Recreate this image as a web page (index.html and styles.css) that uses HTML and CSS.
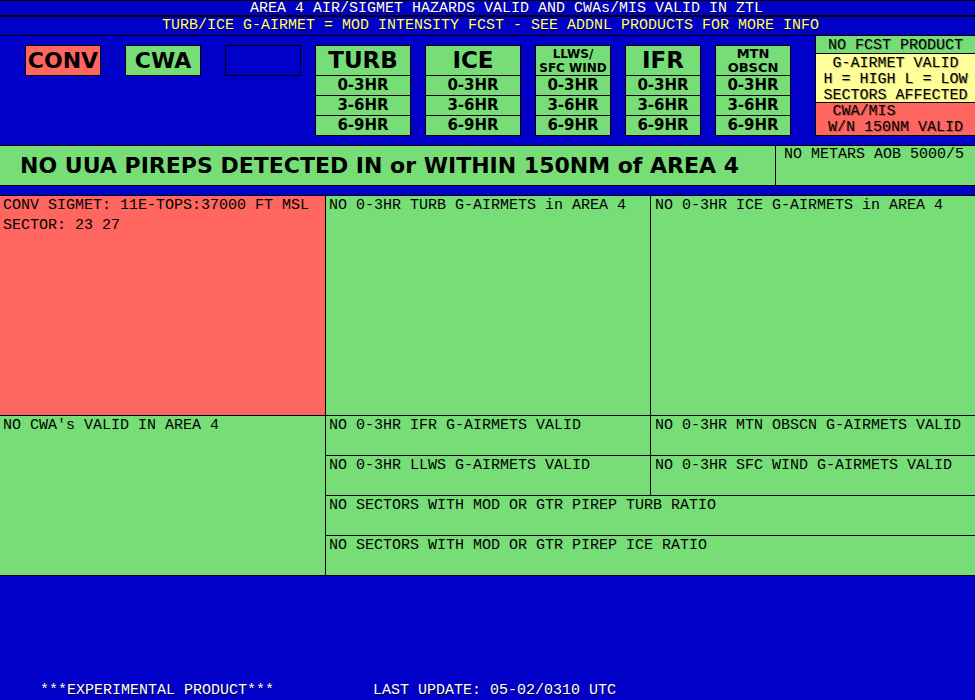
FILE: index.html
```html
<!DOCTYPE html>
<html lang="en">
<head>
<meta charset="utf-8">
<title>Area 4 Hazards</title>
<link rel="stylesheet" href="styles.css">
</head>
<body>
<div class="page">
  <header class="hdr">
    <div class="hdr-line1">AREA 4 AIR/SIGMET HAZARDS VALID AND CWAs/MIS VALID IN ZTL</div>
    <div class="hdr-line2">TURB/ICE G-AIRMET = MOD INTENSITY FCST - SEE ADDNL PRODUCTS FOR MORE INFO</div>
  </header>

  <div class="toolbar">
    <div class="simple">
      <div class="btn red">CONV</div>
      <div class="btn green">CWA</div>
      <div class="btn blank"></div>
    </div>
    <div class="fcst">
      <div class="col wide">
        <div class="col-head">TURB</div>
        <div class="col-row">0-3HR</div>
        <div class="col-row">3-6HR</div>
        <div class="col-row">6-9HR</div>
      </div>
      <div class="col wide">
        <div class="col-head">ICE</div>
        <div class="col-row">0-3HR</div>
        <div class="col-row">3-6HR</div>
        <div class="col-row">6-9HR</div>
      </div>
      <div class="col">
        <div class="col-head small"><span>LLWS/</span><span>SFC WIND</span></div>
        <div class="col-row">0-3HR</div>
        <div class="col-row">3-6HR</div>
        <div class="col-row">6-9HR</div>
      </div>
      <div class="col">
        <div class="col-head">IFR</div>
        <div class="col-row">0-3HR</div>
        <div class="col-row">3-6HR</div>
        <div class="col-row">6-9HR</div>
      </div>
      <div class="col">
        <div class="col-head small mtn"><span>MTN</span><span>OBSCN</span></div>
        <div class="col-row">0-3HR</div>
        <div class="col-row">3-6HR</div>
        <div class="col-row">6-9HR</div>
      </div>
    </div>
    <div class="legend">
      <div class="lg-none">NO FCST PRODUCT</div>
      <div class="lg-valid">
        <div>G-AIRMET VALID</div>
        <div>H = HIGH L = LOW</div>
        <div>SECTORS AFFECTED</div>
      </div>
      <div class="lg-cwa">
        <div class="lg-cwa-l1">CWA/MIS</div>
        <div>W/N 150NM VALID</div>
      </div>
    </div>
  </div>

  <div class="banner">
    <div class="banner-main">NO UUA PIREPS DETECTED IN or WITHIN 150NM of AREA 4</div>
    <div class="banner-side">NO METARS AOB 5000/5</div>
  </div>

  <div class="grid">
    <div class="cell red conv"><div>CONV SIGMET: 11E-TOPS:37000 FT MSL</div><div>SECTOR: 23 27</div></div>
    <div class="cell">NO 0-3HR TURB G-AIRMETS in AREA 4</div>
    <div class="cell c3">NO 0-3HR ICE G-AIRMETS in AREA 4</div>
    <div class="cell cwa">NO CWA's VALID IN AREA 4</div>
    <div class="cell">NO 0-3HR IFR G-AIRMETS VALID</div>
    <div class="cell c3">NO 0-3HR MTN OBSCN G-AIRMETS VALID</div>
    <div class="cell">NO 0-3HR LLWS G-AIRMETS VALID</div>
    <div class="cell c3">NO 0-3HR SFC WIND G-AIRMETS VALID</div>
    <div class="cell span2">NO SECTORS WITH MOD OR GTR PIREP TURB RATIO</div>
    <div class="cell span2">NO SECTORS WITH MOD OR GTR PIREP ICE RATIO</div>
  </div>

  <footer class="foot">
    <span>***EXPERIMENTAL PRODUCT***</span>
    <span>LAST UPDATE: 05-02/0310 UTC</span>
  </footer>
</div>
</body>
</html>
```
FILE: styles.css
```css
html, body {
  margin: 0;
  padding: 0;
}
body {
  width: 975px;
  height: 700px;
  overflow: hidden;
  background: #0000c8;
  font-family: "Liberation Mono", "DejaVu Sans Mono", monospace;
  font-size: 15px;
  color: #000;
}
.page {
  display: flex;
  flex-direction: column;
  height: 700px;
}

/* header */
.hdr-line1 {
  height: 14px;
  line-height: 16px;
  border-top: 1px solid #000;
  border-bottom: 2px solid #000;
  color: #fff;
  text-align: center;
  padding-left: 38px;
  white-space: nowrap;
  text-shadow: 1px 1px 0 rgba(0, 0, 0, 0.7);
}
.hdr-line2 {
  height: 18px;
  line-height: 18px;
  border-bottom: 1px solid #000;
  color: #ffff80;
  text-align: center;
  padding-left: 6px;
  white-space: nowrap;
  text-shadow: 1px 1px 0 rgba(0, 0, 0, 0.7);
}

/* toolbar */
.toolbar {
  display: flex;
  align-items: flex-start;
  height: 109px;
  padding-left: 25px;
}
.simple {
  display: flex;
  gap: 24px;
  margin-top: 9px;
}
.btn {
  width: 76px;
  height: 31px;
  box-sizing: border-box;
  border: 1px solid #000;
  display: flex;
  align-items: center;
  justify-content: center;
  font-family: "DejaVu Sans", sans-serif;
  font-weight: bold;
  font-size: 22px;
  line-height: 1;
}
.red { background: #ff6660; }
.green { background: #77dd77; }
.blank { background: transparent; }

.fcst {
  display: flex;
  gap: 14px;
  margin-left: 14px;
  margin-top: 9px;
}
.col {
  width: 76px;
  box-sizing: border-box;
  border: 1px solid #000;
  background: #77dd77;
  font-family: "DejaVu Sans", sans-serif;
  font-weight: bold;
}
.col.wide { width: 96px; }
.col-head {
  height: 29px;
  display: flex;
  flex-direction: column;
  align-items: center;
  justify-content: center;
  font-size: 23px;
  line-height: 1;
}
.col-head.small {
  font-size: 12px;
  line-height: 14px;
}
.col-head.mtn {
  font-size: 13px;
}
.col-row {
  height: 19px;
  border-top: 1px solid #000;
  display: flex;
  align-items: center;
  justify-content: center;
  font-size: 15px;
  line-height: 1;
}

/* legend */
.legend {
  flex: 1;
  margin-left: 24px;
  border-left: 1px solid #000;
  text-align: center;
  white-space: nowrap;
  text-shadow: 1px 1px 0 rgba(0, 0, 0, 0.3);
}
.lg-none {
  height: 17px;
  line-height: 20px;
  background: #77dd77;
  border-bottom: 1px solid #000;
}
.lg-valid {
  height: 49px;
  box-sizing: border-box;
  padding-top: 2px;
  line-height: 16px;
  background: #ffff99;
  border-bottom: 1px solid #000;
}
.lg-cwa {
  height: 33px;
  box-sizing: border-box;
  padding-top: 1px;
  line-height: 16px;
  background: #ff6660;
  border-bottom: 1px solid #000;
}
.lg-cwa-l1 {
  padding-right: 63px;
}

/* banner */
.banner {
  display: flex;
  height: 39px;
  border-top: 1px solid #000;
  border-bottom: 1px solid #000;
  background: #77dd77;
}
.banner-main {
  width: 755px;
  padding-left: 20px;
  border-right: 1px solid #000;
  display: flex;
  align-items: center;
  font-family: "DejaVu Sans", sans-serif;
  font-weight: bold;
  font-size: 22px;
  white-space: nowrap;
}
.banner-side {
  flex: 1;
  padding-left: 8px;
  line-height: 17px;
  white-space: nowrap;
}

/* grid */
.grid {
  margin-top: 9px;
  display: grid;
  grid-template-columns: 325px 324px 324px;
  grid-template-rows: 219px 39px 39px 39px 39px;
  gap: 1px;
  background: #000;
  border-top: 1px solid #000;
  border-bottom: 1px solid #000;
}
.cell {
  background: #77dd77;
  padding-left: 3px;
  line-height: 20px;
  white-space: nowrap;
  overflow: hidden;
}
.cell.red { background: #ff6660; }
.cell.c3 { padding-left: 4px; }
.cell.cwa { grid-row: 2 / 6; }
.cell.span2 { grid-column: 2 / 4; }

/* footer */
.foot {
  margin-top: auto;
  display: flex;
  gap: 99px;
  padding-left: 40px;
  line-height: 19px;
  color: #fff;
  white-space: nowrap;
  text-shadow: 1px 1px 0 rgba(0, 0, 0, 0.7);
}
```
